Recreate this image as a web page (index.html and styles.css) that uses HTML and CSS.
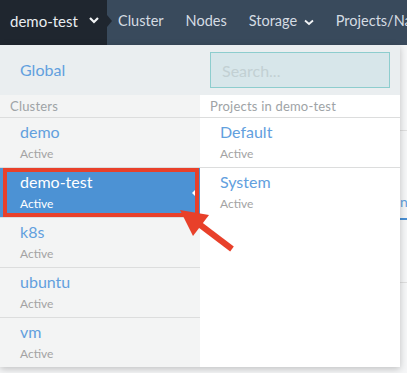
FILE: index.html
```html
<!DOCTYPE html>
<html lang="en">
	<head>
		<meta charset="utf-8">
		<title>Clusters</title>
		<link rel="stylesheet" href="styles.css">
	</head>
	<body>
		<header class="topbar">
			<div class="cluster-pick">
				<span>demo-test</span>
				<svg class="chev" width="10" height="7" viewBox="0 0 10 7"><polyline points="1,1 5,5 9,1" /></svg>
			</div>
			<nav class="main-nav">
				<a href="#">Cluster</a>
				<a href="#">Nodes</a>
				<a href="#">Storage <svg class="chev small" width="10" height="7" viewBox="0 0 10 7"><polyline points="1,1.5 5,5 9,1.5" /></svg></a>
				<a href="#">Projects/Na</a>
			</nav>
		</header>

		<main class="page">
			<div class="page-head"></div>
			<div class="tabs">
				<span class="tab active">nt</span>
			</div>
			<div class="page-rule"></div>
		</main>

		<div class="picker">
			<div class="picker-col clusters">
				<div class="picker-top"><a href="#" class="global">Global</a></div>
				<div class="picker-head">Clusters</div>
				<ul class="picker-list">
					<li><a href="#" class="name">demo</a><span class="state">Active</span></li>
					<li class="selected"><a href="#" class="name">demo-test</a><span class="state">Active</span></li>
					<li><a href="#" class="name">k8s</a><span class="state">Active</span></li>
					<li><a href="#" class="name">ubuntu</a><span class="state">Active</span></li>
					<li><a href="#" class="name">vm</a><span class="state">Active</span></li>
				</ul>
			</div>
			<div class="picker-col projects">
				<div class="picker-top"><input type="text" class="search" placeholder="Search..."></div>
				<div class="picker-head">Projects in demo-test</div>
				<ul class="picker-list">
					<li><a href="#" class="name">Default</a><span class="state">Active</span></li>
					<li><a href="#" class="name">System</a><span class="state">Active</span></li>
				</ul>
			</div>
		</div>

		<!-- red callout drawn on top of the screenshot -->
		<svg class="callout" width="407" height="373" viewBox="0 0 407 373">
			<rect x="5" y="170" width="192" height="45" fill="none" stroke="#e8402a" stroke-width="4" />
			<line x1="232" y1="249" x2="199" y2="224" stroke="#e8402a" stroke-width="6" />
			<polygon points="180,210 209,215 193,236" fill="#e8402a" />
		</svg>
	</body>
</html>
```

FILE: styles.css
```css
* { padding: 0; margin: 0; box-sizing: border-box; }
body {
  font-family: Lato, "Open Sans", sans-serif;
  background: #f5f6f7;
  color: #4a4a4a;
  width: 407px;
  height: 373px;
  overflow: hidden;
}
a { text-decoration: none; }
ul { list-style: none; }

/* top bar */
.topbar {
  display: flex;
  height: 45px;
  background: #394a5c;
  font-size: 15px;
  white-space: nowrap;
}
.cluster-pick {
  position: relative;
  flex-shrink: 0;
  display: flex;
  align-items: center;
  width: 107px;
  padding: 0 0 4px 10px;
  background: #1f262f;
  color: #e9edf1;
}
.cluster-pick::after {
  content: "";
  position: absolute;
  right: -5px;
  top: 15px;
  border-left: 5px solid #1f262f;
  border-top: 6px solid transparent;
  border-bottom: 6px solid transparent;
}
.chev {
  margin-left: 11px;
  fill: none;
  stroke: #f2f4f6;
  stroke-width: 2.2;
}
.chev.small { margin-left: 3px; stroke-width: 1.8; }
.main-nav {
  display: flex;
  align-items: center;
  padding-bottom: 4px;
  font-size: 14.5px;
}
.main-nav a {
  padding: 0 11px;
  color: #d5dce3;
}

/* page under the dropdown */
.page-head {
  height: 86px;
  border-bottom: 1px solid #dedede;
}
.tabs {
  padding: 60px 0 0 400px;
  white-space: nowrap;
}
.tab {
  display: inline-block;
  font-size: 14px;
  line-height: 20px;
  padding: 0 0 6px 0;
  color: #5e9fdd;
  border-bottom: 2px solid #4a8fd3;
}
.page-rule {
  margin-top: 62px;
  border-top: 1px solid #dedede;
}

/* cluster / project picker */
.picker {
  position: absolute;
  top: 45px;
  left: 0;
  width: 400px;
  display: flex;
  background: #ffffff;
  box-shadow: 0 2px 7px rgba(0,0,0,.22);
}
.picker-col { width: 200px; }
.clusters { background: #f3f4f4; }
.projects { background: #ffffff; }

.picker-top {
  height: 50px;
  background: #eaeef0;
  display: flex;
  align-items: center;
}
.global {
  padding: 0 0 2px 20px;
  font-size: 16px;
  color: #62a0de;
}
.search {
  margin: 0 10px;
  width: 180px;
  height: 36px;
  padding: 0 11px;
  border: 1px solid #8dcdce;
  background: #d7e6ea;
  font-family: Lato, sans-serif;
  font-size: 16px;
  outline: none;
}
.search::placeholder { color: #c2d0d3; }

.picker-head {
  height: 23px;
  padding: 4px 0 0 10px;
  font-size: 13px;
  line-height: 15px;
  letter-spacing: .2px;
  color: #9ea3a6;
  border-bottom: 1px solid #dcdddd;
}

.picker-list li {
  position: relative;
  height: 50px;
  padding: 4px 0 0 20px;
  border-bottom: 1px solid #dcdddd;
}
.picker-list li:last-child {
  height: 49px;
  border-bottom: none;
}
.picker-list .name {
  display: block;
  font-size: 16px;
  line-height: 20px;
  color: #62a0de;
}
.picker-list .state {
  display: block;
  margin-top: 4px;
  font-size: 12px;
  line-height: 16px;
  color: #a3a3a3;
}
.picker-list li.selected {
  background: #4c92d4;
}
.picker-list li.selected .name,
.picker-list li.selected .state { color: #ffffff; }
.picker-list li.selected::after {
  content: "";
  position: absolute;
  right: 4px;
  top: 21px;
  border-right: 4px solid #ffffff;
  border-top: 4px solid transparent;
  border-bottom: 4px solid transparent;
}

.callout {
  position: absolute;
  top: 0;
  left: 0;
  pointer-events: none;
}
```
